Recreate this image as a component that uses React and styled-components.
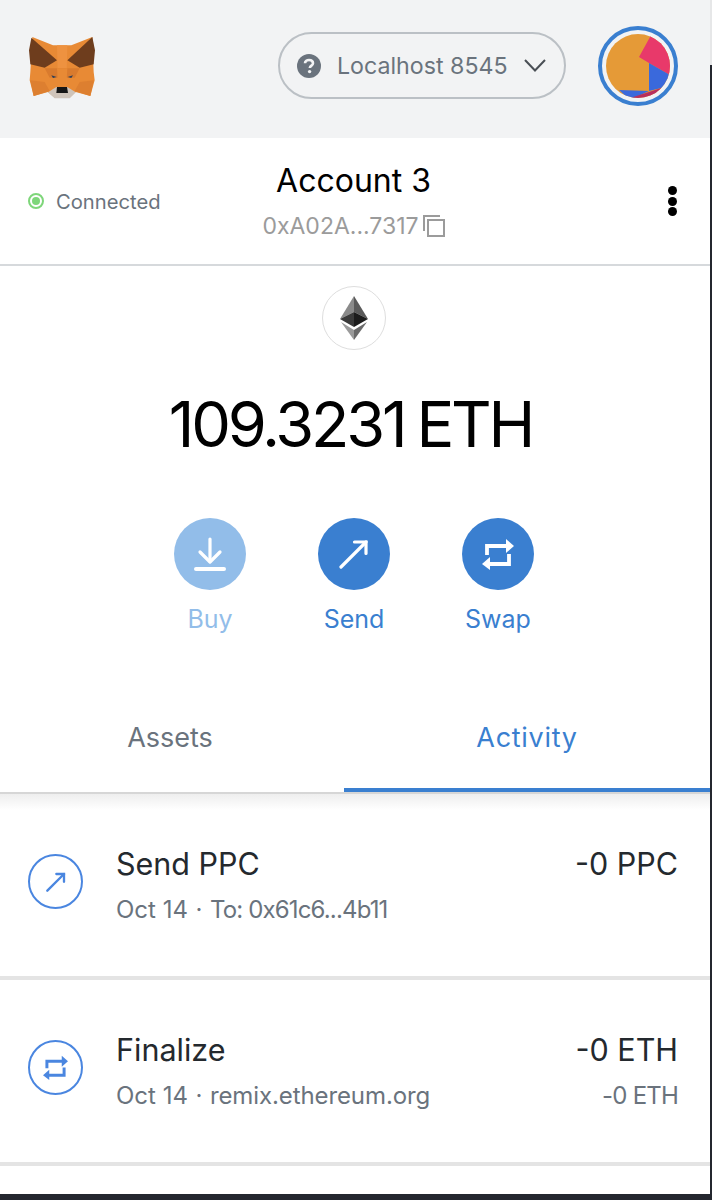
import styled, { createGlobalStyle } from "styled-components";

const GlobalStyle = createGlobalStyle`
  html, body {
    margin: 0;
    padding: 0;
    background: #fff;
  }
  * {
    box-sizing: border-box;
  }
`;

const Page = styled.div`
  width: 712px;
  height: 1200px;
  overflow: hidden;
  display: flex;
  flex-direction: column;
  background: #fff;
  font-family: "Inter", "Noto Sans", sans-serif;
`;

const Body = styled.div`
  flex: 1;
  display: flex;
  background: #e6e7e8;
`;

const Popup = styled.div`
  flex: 1;
  display: flex;
  flex-direction: column;
  background: #fff;
`;

const RightEdge = styled.div`
  width: 2px;
  margin-top: 65px;
  background: #24272f;
`;

const BottomStrip = styled.div`
  height: 6px;
  flex-shrink: 0;
  background: #24272f;
`;

const AppBar = styled.header`
  height: 138px;
  flex-shrink: 0;
  background: #f2f3f4;
  display: flex;
  align-items: center;
  padding: 0 32px 7px 28px;
`;

const Logo = styled.div`
  display: flex;
  margin-top: 5px;
`;

const NetworkPill = styled.div`
  width: 288px;
  height: 67px;
  margin-left: auto;
  margin-right: 32px;
  border: 2px solid #bbc0c5;
  border-radius: 34px;
  display: flex;
  align-items: center;
  padding: 0 18px 0 17px;
  color: #6a737d;
  font-size: 23.2px;
`;

const NetworkName = styled.span`
  margin-left: 16px;
  flex: 1;
  white-space: nowrap;
`;

const AvatarRing = styled.div`
  width: 80px;
  height: 80px;
  border: 4px solid #3a7fd0;
  border-radius: 50%;
  padding: 4px;
`;

const AccountBar = styled.section`
  height: 128px;
  flex-shrink: 0;
  border-bottom: 2px solid #d6d9dc;
  display: grid;
  grid-template-columns: 1fr auto 1fr;
  align-items: center;
  padding: 0 33px 0 28px;
`;

const Status = styled.div`
  display: flex;
  align-items: center;
  gap: 12px;
  color: #6a737d;
  font-size: 20.2px;
`;

const StatusDot = styled.span`
  width: 16px;
  height: 16px;
  border-radius: 50%;
  border: 2px solid #7ed67a;
  display: flex;
  align-items: center;
  justify-content: center;

  &::after {
    content: "";
    width: 8px;
    height: 8px;
    border-radius: 50%;
    background: #7ed67a;
  }
`;

const AccountInfo = styled.div`
  display: flex;
  flex-direction: column;
  align-items: center;
  gap: 12px;
  margin-left: 2px;
`;

const AccountName = styled.div`
  color: #000;
  font-size: 32px;
  line-height: 38px;
`;

const AccountAddress = styled.div`
  display: flex;
  align-items: center;
  gap: 4px;
  color: #9b9b9b;
  font-size: 23px;
  line-height: 28px;
`;

const MenuDots = styled.div`
  justify-self: end;
  display: flex;
  flex-direction: column;
  gap: 1.5px;

  span {
    width: 9px;
    height: 9px;
    border-radius: 50%;
    background: #000;
  }
`;

const Balance = styled.section`
  display: flex;
  flex-direction: column;
  align-items: center;
  padding: 20px 2px 0 0;
`;

const TokenIcon = styled.div`
  width: 64px;
  height: 64px;
  border: 1.5px solid #dedede;
  border-radius: 50%;
  display: flex;
  align-items: center;
  justify-content: center;
`;

const BalanceAmount = styled.div`
  margin: 35px 7px 0 0;
  display: flex;
  gap: 12px;
  color: #000;
  font-size: 63px;
  line-height: 78px;
  letter-spacing: -3.2px;
  font-weight: 400;
`;

const Actions = styled.div`
  margin-top: 55px;
  display: flex;
  gap: 72px;
`;

const Action = styled.div`
  width: 72px;
  display: flex;
  flex-direction: column;
  align-items: center;
  gap: 13px;
  color: ${(p) => (p.$muted ? "#92bde9" : "#3a7fd0")};
  font-size: 25px;
  line-height: 32px;
`;

const ActionCircle = styled.div`
  width: 72px;
  height: 72px;
  border-radius: 50%;
  background: ${(p) => (p.$muted ? "#92bde9" : "#3a7fd0")};
  display: flex;
  align-items: center;
  justify-content: center;
`;

const Tabs = styled.nav`
  position: relative;
  margin-top: 69px;
  display: flex;
  border-bottom: 2px solid #d6d6d6;

  &::after {
    content: "";
    position: absolute;
    left: 0;
    right: 0;
    top: 100%;
    margin-top: 2px;
    height: 16px;
    background: linear-gradient(#eeeeee, #ffffff);
  }
`;

const Tab = styled.div`
  width: ${(p) => (p.$active ? "366px" : "344px")};
  height: 88px;
  padding: 16px ${(p) => (p.$active ? "0" : "4px")} 0 0;
  text-align: center;
  font-size: 27px;
  line-height: 36px;
  letter-spacing: ${(p) => (p.$active ? "0.7px" : "0")};
  color: ${(p) => (p.$active ? "#3a7fd0" : "#6a737d")};
  border-bottom: ${(p) => (p.$active ? "4px solid #3a7fd0" : "none")};
`;

const ActivityRow = styled.div`
  height: 186px;
  flex-shrink: 0;
  border-bottom: 4px solid #e4e4e4;
  display: flex;
  align-items: center;
  padding: 0 32px 0 28px;
`;

const RowIcon = styled.div`
  width: 55px;
  height: 55px;
  flex-shrink: 0;
  margin-bottom: 7px;
  border: 2px solid #4a86e0;
  border-radius: 50%;
  display: flex;
  align-items: center;
  justify-content: center;
`;

const RowBody = styled.div`
  flex: 1;
  margin-left: 33px;
  display: flex;
  flex-direction: column;
  gap: 12px;
`;

const RowTitle = styled.div`
  color: #24292e;
  font-size: 30.5px;
  line-height: 38px;
`;

const RowMeta = styled.div`
  display: flex;
  color: #6a737d;
  font-size: 24px;
  line-height: 30px;
  letter-spacing: ${(p) => (p.$tight ? "-0.8px" : "0")};
`;

const MetaDot = styled.span`
  width: 22px;
  text-align: center;
`;

const MetaDetail = styled.span`
  letter-spacing: ${(p) => (p.$tight ? "-0.85px" : "-0.1px")};
`;

const RowAmounts = styled.div`
  display: flex;
  flex-direction: column;
  align-items: flex-end;
  gap: 12px;
`;

function FoxLogo() {
  return (
    <svg width="68" height="63" viewBox="25 30 204 189">
      <path d="M38 30 L100 55 L155 55 L218 30 L222 135 L225 160 L212 207 L168 195 L150 212 L105 212 L85 195 L42 207 L30 160 L32 135 Z" fill="#e88a35" />
      <path d="M112 55 L143 55 L140 175 L115 175 Z" fill="#ee9240" />
      <path d="M35 32 L112 100 L75 122 L32 112 L28 70 Z" fill="#6e3d1d" />
      <path d="M218 30 L143 100 L180 122 L222 112 L226 70 Z" fill="#6e3d1d" />
      <path d="M75 124 L180 124 L165 152 L90 152 Z" fill="#d97b2e" />
      <path d="M112 124 L143 124 L140 175 L115 175 Z" fill="#e88a35" />
      <path d="M32 160 L75 165 L90 192 L42 207 Z" fill="#dd7f30" />
      <path d="M222 160 L180 165 L165 192 L212 207 Z" fill="#dd7f30" />
      <path d="M95 145 L111 150 L100 153 Z" fill="#2e3f58" />
      <path d="M160 145 L144 150 L155 153 Z" fill="#2e3f58" />
      <path d="M85 196 L110 180 L143 180 L168 196 L150 214 L105 214 Z" fill="#cfc4ba" />
      <path d="M112 180 L142 180 L145 198 L110 198 Z" fill="#161616" />
    </svg>
  );
}

function QuestionIcon() {
  return (
    <svg width="24" height="24" viewBox="0 0 24 24">
      <circle cx="12" cy="12" r="12" fill="#6a737d" />
      <path d="M8 9.3 C8 7 10 6 12 6 C14.2 6 16 7.2 16 9.2 C16 11.6 13 11.6 12.8 14" fill="none" stroke="#f2f3f4" strokeWidth="2.6" />
      <circle cx="12.6" cy="17.6" r="1.7" fill="#f2f3f4" />
    </svg>
  );
}

function Chevron() {
  return (
    <svg width="22" height="13" viewBox="0 0 22 13" fill="none" stroke="#4a4f55" strokeWidth="2">
      <path d="M1 1 L11 11.5 L21 1" />
    </svg>
  );
}

function Jazzicon() {
  return (
    <svg width="64" height="64" viewBox="0 0 64 64">
      <defs>
        <clipPath id="jazz-clip">
          <circle cx="32" cy="32" r="32" />
        </clipPath>
      </defs>
      <g clipPath="url(#jazz-clip)">
        <rect width="64" height="64" fill="#e59a37" />
        <path d="M44 3 L33 23 L43 29 L64 41 L70 0 L44 0 Z" fill="#e8396a" />
        <path d="M43 29 L64 41 L64 52 L55 54 L43 57 Z" fill="#3a69dc" />
        <path d="M13 56 L43 57 L24 66 Z" fill="#3a69dc" />
        <path d="M55 54 L43 58 L24 64 L24 68 L50 68 Z" fill="#b82f5e" />
      </g>
    </svg>
  );
}

function CopyIcon() {
  return (
    <svg width="22" height="22" viewBox="0 0 22 22" fill="none" stroke="#9b9b9b" strokeWidth="2">
      <path d="M1 16 V1 H17" />
      <rect x="5" y="5" width="16" height="16" />
    </svg>
  );
}

function EthLogo() {
  return (
    <svg width="28" height="44" viewBox="0 0 28 44">
      <path d="M14 0 L0 23 L14 16 Z" fill="#8a8a8a" />
      <path d="M14 0 L28 23 L14 16 Z" fill="#5a5a5a" />
      <path d="M14 16 L0 23 L14 31 Z" fill="#3a3a3a" />
      <path d="M14 16 L28 23 L14 31 Z" fill="#1c1c1c" />
      <path d="M1 26 L14 34 L14 44 Z" fill="#9a9a9a" />
      <path d="M27 26 L14 34 L14 44 Z" fill="#6a6a6a" />
    </svg>
  );
}

function DownloadIcon() {
  return (
    <svg width="32" height="34" viewBox="0 0 32 34" fill="none" stroke="#fff" strokeWidth="3.2" strokeLinecap="round" strokeLinejoin="round">
      <path d="M16 2 V24" />
      <path d="M6 15 L16 25 L26 15" />
      <path d="M2 32 H30" strokeWidth="4" />
    </svg>
  );
}

function ArrowIcon({ size = 30, color = "#fff", width = 3.2 }) {
  return (
    <svg width={size} height={size} viewBox="0 0 30 30" fill="none" stroke={color} strokeWidth={width} strokeLinecap="round" strokeLinejoin="miter">
      <path d="M2 28 L27 3" />
      <path d="M15.5 3 H27 V14.5" />
    </svg>
  );
}

function SwapIcon({ size = 32, color = "#fff", width = 3.8 }) {
  return (
    <svg width={size} height={size} viewBox="0 0 32 32" fill="none" stroke={color} strokeWidth={width}>
      <path d="M5 17 V8 H26" />
      <path d="M27 16 V26 H6" />
      <path d="M24 1 L32 8 L24 15 Z" fill={color} stroke="none" />
      <path d="M8 19 L0 26 L8 32 Z" fill={color} stroke="none" />
    </svg>
  );
}

export default function App() {
  return (
    <Page>
      <GlobalStyle />
      <Body>
        <Popup>
          <AppBar>
            <Logo>
              <FoxLogo />
            </Logo>
            <NetworkPill>
              <QuestionIcon />
              <NetworkName>Localhost 8545</NetworkName>
              <Chevron />
            </NetworkPill>
            <AvatarRing>
              <Jazzicon />
            </AvatarRing>
          </AppBar>
          <AccountBar>
            <Status>
              <StatusDot />
              Connected
            </Status>
            <AccountInfo>
              <AccountName>Account 3</AccountName>
              <AccountAddress>
                0xA02A...7317
                <CopyIcon />
              </AccountAddress>
            </AccountInfo>
            <MenuDots>
              <span />
              <span />
              <span />
            </MenuDots>
          </AccountBar>
          <Balance>
            <TokenIcon>
              <EthLogo />
            </TokenIcon>
            <BalanceAmount>
              <span>109.3231</span>
              <span>ETH</span>
            </BalanceAmount>
            <Actions>
              <Action $muted>
                <ActionCircle $muted>
                  <DownloadIcon />
                </ActionCircle>
                Buy
              </Action>
              <Action>
                <ActionCircle>
                  <ArrowIcon />
                </ActionCircle>
                Send
              </Action>
              <Action>
                <ActionCircle>
                  <SwapIcon />
                </ActionCircle>
                Swap
              </Action>
            </Actions>
          </Balance>
          <Tabs>
            <Tab>Assets</Tab>
            <Tab $active>Activity</Tab>
          </Tabs>
          <ActivityRow>
            <RowIcon>
              <ArrowIcon size={20} color="#4a86e0" width={3.5} />
            </RowIcon>
            <RowBody>
              <RowTitle>Send PPC</RowTitle>
              <RowMeta>
                <span>Oct 14</span>
                <MetaDot>·</MetaDot>
                <MetaDetail $tight>To: 0x61c6...4b11</MetaDetail>
              </RowMeta>
            </RowBody>
            <RowAmounts>
              <RowTitle>-0 PPC</RowTitle>
              <RowMeta>&nbsp;</RowMeta>
            </RowAmounts>
          </ActivityRow>
          <ActivityRow>
            <RowIcon>
              <SwapIcon size={25} color="#4a86e0" width={3.8} />
            </RowIcon>
            <RowBody>
              <RowTitle>Finalize</RowTitle>
              <RowMeta>
                <span>Oct 14</span>
                <MetaDot>·</MetaDot>
                <MetaDetail>remix.ethereum.org</MetaDetail>
              </RowMeta>
            </RowBody>
            <RowAmounts>
              <RowTitle>-0 ETH</RowTitle>
              <RowMeta $tight>-0 ETH</RowMeta>
            </RowAmounts>
          </ActivityRow>
        </Popup>
        <RightEdge />
      </Body>
      <BottomStrip />
    </Page>
  );
}
